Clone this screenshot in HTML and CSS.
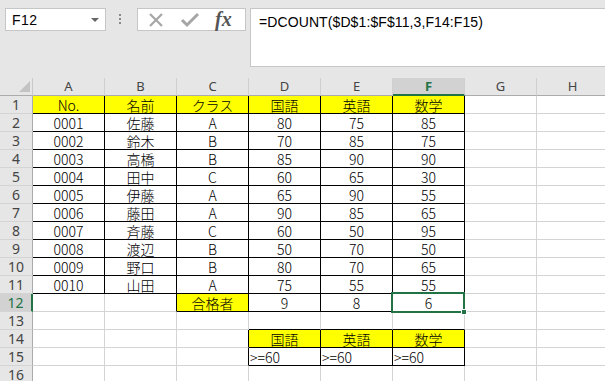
FILE: index.html
```html
<!DOCTYPE html>
<html lang="ja">
<head>
<meta charset="utf-8">
<link rel="stylesheet" href="styles.css">
</head>
<body>
<div class="app">
  <div class="topbar">
    <div class="namebox"><span class="nb-text">F12</span><span class="nb-arrow"></span></div>
    <div class="grip"><span></span><span></span><span></span></div>
    <div class="fxbox">
      <svg class="ico" width="18" height="16" viewBox="0 0 18 16"><path d="M3 2 L15 14 M15 2 L3 14" stroke="#a6a6a6" stroke-width="2.2" fill="none"/></svg>
      <svg class="ico chk" width="20" height="16" viewBox="0 0 20 16"><path d="M2 8 L7 13 L18 2" stroke="#a6a6a6" stroke-width="3" fill="none"/></svg>
      <span class="fx">fx</span>
    </div>
    <div class="formula">=DCOUNT($D$1:$F$11,3,F14:F15)</div>
  </div>
  <div class="sheet">
    <div class="corner"><span class="tri"></span></div>
    <div class="ch">A</div><div class="ch">B</div><div class="ch">C</div><div class="ch">D</div><div class="ch">E</div><div class="ch sel">F</div><div class="ch">G</div><div class="ch">H</div>

    <div class="rh">1</div><div class="c t y">No.</div><div class="c t y">名前</div><div class="c t y">クラス</div><div class="c t y">国語</div><div class="c t y">英語</div><div class="c t y">数学</div><div class="c"></div><div class="c"></div>
    <div class="rh">2</div><div class="c t">0001</div><div class="c t">佐藤</div><div class="c t">A</div><div class="c t">80</div><div class="c t">75</div><div class="c t">85</div><div class="c"></div><div class="c"></div>
    <div class="rh">3</div><div class="c t">0002</div><div class="c t">鈴木</div><div class="c t">B</div><div class="c t">70</div><div class="c t">85</div><div class="c t">75</div><div class="c"></div><div class="c"></div>
    <div class="rh">4</div><div class="c t">0003</div><div class="c t">高橋</div><div class="c t">B</div><div class="c t">85</div><div class="c t">90</div><div class="c t">90</div><div class="c"></div><div class="c"></div>
    <div class="rh">5</div><div class="c t">0004</div><div class="c t">田中</div><div class="c t">C</div><div class="c t">60</div><div class="c t">65</div><div class="c t">30</div><div class="c"></div><div class="c"></div>
    <div class="rh">6</div><div class="c t">0005</div><div class="c t">伊藤</div><div class="c t">A</div><div class="c t">65</div><div class="c t">90</div><div class="c t">55</div><div class="c"></div><div class="c"></div>
    <div class="rh">7</div><div class="c t">0006</div><div class="c t">藤田</div><div class="c t">A</div><div class="c t">90</div><div class="c t">85</div><div class="c t">65</div><div class="c"></div><div class="c"></div>
    <div class="rh">8</div><div class="c t">0007</div><div class="c t">斉藤</div><div class="c t">C</div><div class="c t">60</div><div class="c t">50</div><div class="c t">95</div><div class="c"></div><div class="c"></div>
    <div class="rh">9</div><div class="c t">0008</div><div class="c t">渡辺</div><div class="c t">B</div><div class="c t">50</div><div class="c t">70</div><div class="c t">50</div><div class="c"></div><div class="c"></div>
    <div class="rh">10</div><div class="c t">0009</div><div class="c t">野口</div><div class="c t">B</div><div class="c t">80</div><div class="c t">70</div><div class="c t">65</div><div class="c"></div><div class="c"></div>
    <div class="rh">11</div><div class="c t">0010</div><div class="c t">山田</div><div class="c t">A</div><div class="c t">75</div><div class="c t">55</div><div class="c t">55</div><div class="c"></div><div class="c"></div>
    <div class="rh sel">12</div><div class="c"></div><div class="c r"></div><div class="c t y">合格者</div><div class="c t">9</div><div class="c t">8</div><div class="c t active">6<span class="selbox"><span class="handle"></span></span></div><div class="c"></div><div class="c"></div>
    <div class="rh">13</div><div class="c"></div><div class="c"></div><div class="c"></div><div class="c b"></div><div class="c b"></div><div class="c b"></div><div class="c"></div><div class="c"></div>
    <div class="rh">14</div><div class="c"></div><div class="c"></div><div class="c r"></div><div class="c t y">国語</div><div class="c t y">英語</div><div class="c t y">数学</div><div class="c"></div><div class="c"></div>
    <div class="rh">15</div><div class="c"></div><div class="c"></div><div class="c r"></div><div class="c t l">&gt;=60</div><div class="c t l">&gt;=60</div><div class="c t l">&gt;=60</div><div class="c"></div><div class="c"></div>
    <div class="rh">16</div><div class="c"></div><div class="c"></div><div class="c"></div><div class="c"></div><div class="c"></div><div class="c"></div><div class="c"></div><div class="c"></div>
  </div>
</div>
</body>
</html>
```
FILE: styles.css
```css
* { box-sizing: border-box; }
html, body { margin: 0; padding: 0; }
body {
  width: 605px;
  height: 381px;
  overflow: hidden;
  background: #e6e6e6;
  font-family: "Noto Sans CJK JP", "Noto Sans", sans-serif;
}
.app { width: 605px; }
.topbar {
  height: 78px;
  display: flex;
  align-items: flex-start;
  padding: 8px 0 0 5px;
  background: #e6e6e6;
}
.namebox {
  width: 101px;
  height: 23px;
  background: #fff;
  border: 1px solid #c6c6c6;
  display: flex;
  align-items: center;
  justify-content: space-between;
  padding: 0 6px 0 6px;
}
.nb-text {
  font-family: "Liberation Sans", sans-serif;
  font-size: 14px;
  color: #000;
  letter-spacing: 0.5px;
}
.nb-arrow {
  width: 0; height: 0;
  border-left: 4px solid transparent;
  border-right: 4px solid transparent;
  border-top: 4px solid #666;
  margin-top: 1px;
}
.grip {
  width: 4px;
  margin-left: 13px;
  margin-top: 6px;
  display: flex;
  flex-direction: column;
  gap: 2px;
}
.grip span {
  width: 2px; height: 2px;
  background: #8a8a8a;
}
.fxbox {
  margin-left: 14px;
  width: 109px;
  height: 23px;
  background: #fff;
  border: 1px solid #c6c6c6;
  display: flex;
  align-items: center;
  padding-left: 9px;
}
.ico { display: block; }
.chk { margin-left: 15px; }
.fx {
  margin-left: 15px;
  font-family: "Liberation Serif", "DejaVu Serif", serif;
  font-style: italic;
  font-weight: bold;
  font-size: 20px;
  color: #555;
  line-height: 20px;
  margin-top: -2px;
}
.formula {
  margin-left: 4px;
  flex: 1;
  height: 59px;
  background: #fff;
  border: 1px solid #c6c6c6;
  border-right: none;
  padding: 5px 0 0 8px;
  font-family: "Liberation Sans", sans-serif;
  font-size: 14px;
  color: #000;
  letter-spacing: 0.1px;
}
.sheet {
  display: grid;
  grid-template-columns: 33px repeat(8, 72px);
  grid-auto-rows: 18px;
  background: #fff;
  width: 609px;
}
.corner {
  background: #e6e6e6;
  border-right: 1px solid #c9c9c9;
  border-bottom: 1px solid #ababab;
  position: relative;
}
.tri {
  position: absolute;
  right: 2px;
  bottom: 3px;
  width: 0; height: 0;
  border-left: 11px solid transparent;
  border-bottom: 11px solid #c3c3c3;
}
.ch {
  background: #e6e6e6;
  border-right: 1px solid #cfcfcf;
  border-bottom: 1px solid #ababab;
  text-align: center;
  font-family: "Noto Sans", "Liberation Sans", sans-serif;
  font-size: 13px;
  line-height: 17px;
  color: #444;
}
.ch.sel {
  background: #d2d2d2;
  color: #217346;
  border-bottom: 2px solid #217346;
  font-weight: bold;
}
.rh {
  background: #e6e6e6;
  border-right: 1px solid #ababab;
  border-bottom: 1px solid #d4d4d4;
  text-align: center;
  font-family: "Noto Sans", "Liberation Sans", sans-serif;
  font-size: 14px;
  line-height: 17px;
  color: #444;
  overflow: hidden;
}
.rh.sel {
  background: #d2d2d2;
  color: #217346;
  border-right: 2px solid #217346;
}
.c {
  border-right: 1px solid #d4d4d4;
  border-bottom: 1px solid #d4d4d4;
  text-align: center;
  font-size: 14px;
  font-weight: 300;
  line-height: 16px;
  padding-top: 1px;
  color: #000;
  white-space: nowrap;
  overflow: visible;
  position: relative;
}
.c.t { border-right-color: #000; border-bottom-color: #000; }
.c.r { border-right-color: #000; }
.c.b { border-bottom-color: #000; }
.c.y { background: #ffff00; }
.c.l { text-align: left; padding-left: 1px; }
.c.active { z-index: 2; }
.selbox {
  position: absolute;
  left: -2px;
  top: -2px;
  width: 74px;
  height: 21px;
  border: 2px solid #217346;
}
.handle {
  position: absolute;
  right: -4px;
  bottom: -4px;
  width: 6px;
  height: 6px;
  background: #217346;
  border: 1px solid #fff;
}
```
